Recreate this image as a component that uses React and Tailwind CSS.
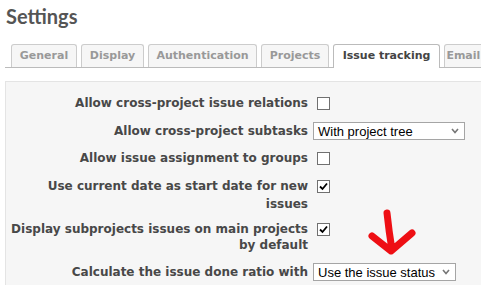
import React from "react";

const Check = ({ checked }) => (
  <div className="w-[13px] h-[13px] border border-[#707070] bg-white flex items-center justify-center">
    {checked && (
      <svg width="9" height="9" viewBox="0 0 9 9">
        <path d="M1 4.5 L3.5 7 L8 1.5" fill="none" stroke="#000" strokeWidth="1.8" />
      </svg>
    )}
  </div>
);

const Select = ({ text, w }) => (
  <div
    className={`h-[18px] border border-[#a5a5a5] bg-white flex items-center justify-between pl-[4px] pr-[5px] text-[13px] font-normal text-black whitespace-nowrap ${w}`}
    style={{ fontFamily: '"Liberation Sans", Arial, sans-serif' }}
  >
    <span className="leading-none">{text}</span>
    <svg width="8" height="6" viewBox="0 0 8 6">
      <path d="M1 1 L4 4.5 L7 1" fill="none" stroke="#777" strokeWidth="1.6" />
    </svg>
  </div>
);

const tabs = [
  { t: "General", w: "w-[66px]" },
  { t: "Display", w: "w-[63px]" },
  { t: "Authentication", w: "w-[109px]" },
  { t: "Projects", w: "w-[68px]" },
  { t: "Issue tracking", w: "w-[107px]", active: true },
  { t: "Email notifications", w: "w-[120px]" },
];

export default function App() {
  return (
    <div
      className="relative w-[481px] h-[285px] bg-white overflow-hidden"
      style={{ fontFamily: '"DejaVu Sans", Verdana, sans-serif' }}
    >
      <h2
        className="pl-[6px] pt-[4px] text-[20px] leading-[24px] font-bold text-[#555]"
        style={{ fontFamily: 'Lato, "Open Sans", sans-serif' }}
      >
        Settings
      </h2>
      <div className="mt-[17px] ml-[5px] h-[23px] border-b border-[#bbb] flex items-end gap-[4px] pl-[6px]">
        {tabs.map((tab) => (
          <div
            key={tab.t}
            className={`shrink-0 h-[23px] rounded-t-[3px] border border-b-0 flex items-center justify-center text-[11px] font-bold whitespace-nowrap overflow-hidden ${tab.w} ${
              tab.active
                ? "bg-white border-[#bbb] text-[#444] h-[24px] -mb-px"
                : "bg-[#f6f6f6] border-[#ccc] text-[#999]"
            }`}
          >
            {tab.t}
          </div>
        ))}
      </div>
      <div className="mt-[13px] ml-[5px] w-[500px] h-[260px] border border-[#e4e4e4] bg-[#f6f6f6] pt-[13px]">
        <div className="flex flex-col gap-[10px] text-[12px] leading-[17px] font-bold text-[#484848]">
          <div className="flex items-center">
            <div className="w-[302px] text-right">Allow cross-project issue relations</div>
            <div className="ml-[9px]"><Check /></div>
          </div>
          <div className="flex items-center">
            <div className="w-[302px] text-right">Allow cross-project subtasks</div>
            <div className="ml-[5px]"><Select text="With project tree" w="w-[152px]" /></div>
          </div>
          <div className="flex items-center">
            <div className="w-[302px] text-right">Allow issue assignment to groups</div>
            <div className="ml-[9px]"><Check /></div>
          </div>
          <div className="flex items-start">
            <div className="w-[302px] text-right leading-[18px]">
              Use current date as start date for new
              <br />
              issues
            </div>
            <div className="ml-[9px] mt-[3px]"><Check checked /></div>
          </div>
          <div className="flex items-start -mt-[2px]">
            <div className="w-[302px] text-right leading-[16px]">
              Display subprojects issues on main projects
              <br />
              by default
            </div>
            <div className="ml-[9px] mt-[2px]"><Check checked /></div>
          </div>
          <div className="flex items-center">
            <div className="w-[302px] text-right">Calculate the issue done ratio with</div>
            <div className="ml-[5px]"><Select text="Use the issue status" w="w-[143px]" /></div>
          </div>
        </div>
      </div>
      <svg className="absolute left-0 top-0" width="481" height="285" viewBox="0 0 481 285">
        <path
          d="M387 213 Q389 232 392 250 M372 236 L391 251 L412 233"
          fill="none"
          stroke="#ee0f14"
          strokeWidth="7"
          strokeLinecap="round"
          strokeLinejoin="round"
        />
      </svg>
    </div>
  );
}
